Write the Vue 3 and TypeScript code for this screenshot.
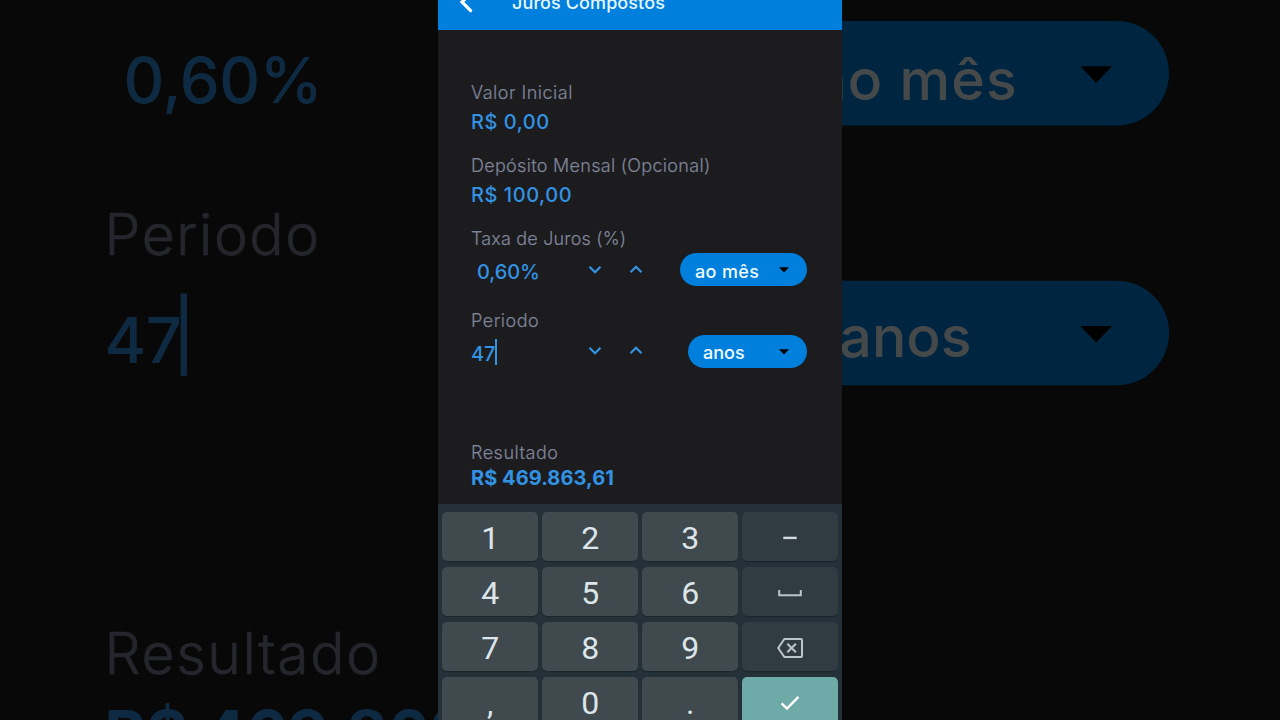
<script setup lang="ts">
interface Rate {
  label: string
  value: string
  unit: string
  editing: boolean
  kind: string
}

const layers: string[] = ['backdrop', 'front']

const deposits = [
  { label: 'Valor Inicial', value: 'R$ 0,00', kind: 'initial' },
  { label: 'Depósito Mensal (Opcional)', value: 'R$ 100,00', kind: 'monthly' },
]

const rates: Rate[] = [
  { label: 'Taxa de Juros (%)', value: '0,60%', unit: 'ao mês', editing: false, kind: 'rate' },
  { label: 'Periodo', value: '47', unit: 'anos', editing: true, kind: 'period' },
]

const keys: string[] = ['1', '2', '3', 'minus', '4', '5', '6', 'space', '7', '8', '9', 'delete', ',', '0', '.', 'done']
const actions = ['minus', 'space', 'delete', 'done']
</script>

<template>
  <main class="stage">
    <div v-for="layer in layers" :key="layer" class="phone" :class="layer" :aria-hidden="layer === 'backdrop'">
      <header class="bar">
        <svg class="back" viewBox="0 0 16 24" width="16" height="24">
          <path d="M12.6 2.4 4 11 12.6 19.6" />
        </svg>
        <h1 class="title">Juros Compostos</h1>
      </header>

      <section class="form">
        <div v-for="d in deposits" :key="d.kind" class="field">
          <div class="label" :class="d.kind"><span>{{ d.label }}</span></div>
          <div class="value" :class="d.kind"><span>{{ d.value }}</span></div>
        </div>

        <div v-for="r in rates" :key="r.kind" class="field rated" :class="r.kind">
          <div class="label" :class="r.kind"><span>{{ r.label }}</span></div>
          <div class="row">
            <div class="value entry" :class="r.kind">
              <span>{{ r.value }}</span><i v-if="r.editing" class="caret"></i>
            </div>
            <svg class="step" viewBox="0 0 14 10" width="14" height="10"><path d="M1.5 1.8 7 7.2 12.5 1.8" /></svg>
            <svg class="step up" viewBox="0 0 14 10" width="14" height="10"><path d="M1.5 7.2 7 1.8 12.5 7.2" /></svg>
            <div class="pill" :class="r.kind">
              <span>{{ r.unit }}</span>
              <svg viewBox="0 0 10 6" width="10" height="6"><path d="M0 0.3h10L5 5.5z" /></svg>
            </div>
          </div>
        </div>

        <div class="result">
          <div class="label outcome"><span>Resultado</span></div>
          <div class="total"><span>R$ 469.863,61</span></div>
        </div>
      </section>

      <section v-if="layer === 'front'" class="keyboard">
        <div v-for="k in keys" :key="k" class="key" :class="{ action: actions.includes(k), done: k === 'done' }">
          <svg v-if="k === 'minus'" viewBox="0 0 14 4" width="14" height="4"><path class="line" d="M0.3 1.9h13.4" /></svg>
          <svg v-else-if="k === 'space'" viewBox="0 0 24 8" width="24" height="8"><path class="line soft" d="M1.2 1v5.3h21.6V1" /></svg>
          <svg v-else-if="k === 'delete'" viewBox="0 0 28 22" width="28" height="22">
            <path class="line soft" d="M8.4 1.9H24.6a1.4 1.4 0 0 1 1.4 1.4v15.4a1.4 1.4 0 0 1-1.4 1.4H8.4L2.2 11z" />
            <path class="line soft" d="m11.3 6.7 8.6 8.6m0-8.6-8.6 8.6" />
          </svg>
          <svg v-else-if="k === 'done'" viewBox="0 0 20 16" width="20" height="16"><path class="line tick" d="M1.6 8.3 7 13.6 18.4 1.9" /></svg>
          <span v-else>{{ k }}</span>
        </div>
      </section>
    </div>
  </main>
</template>

<style>
html,
body {
  margin: 0;
  background: #000;
  overflow: hidden;
}
</style>

<style scoped>
.stage {
  position: relative;
  width: 1280px;
  height: 720px;
  overflow: hidden;
  background: #000;
  font-family: Inter, "Noto Sans", sans-serif;
}
.phone {
  position: absolute;
  top: 0;
  left: 438px;
  width: 404px;
  height: 720px;
  overflow: hidden;
  background: #1c1c1e;
}
.backdrop {
  transform: scale(3.168);
  opacity: 0.29;
}
.bar {
  display: flex;
  align-items: center;
  height: 54px;
  margin-top: -24px;
  padding-left: 20px;
  background: #007fdc;
  box-sizing: border-box;
}
.back {
  margin-top: -1px;
}
.back path {
  fill: none;
  stroke: #fff;
  stroke-width: 3.2;
  stroke-linecap: round;
}
.title {
  margin: -2px 0 0 38px;
  color: #e6f6ff;
  font-size: 18px;
  font-weight: 500;
  line-height: 27px;
  letter-spacing: 0.1px;
  white-space: nowrap;
}
.form {
  height: 474px;
  padding: 49px 35px 0 33px;
  box-sizing: border-box;
}
.field {
  margin-bottom: 15px;
}
.field.rate {
  margin-bottom: 20px;
}
.label {
  height: 28px;
  color: #7f849a;
  font-size: 18px;
  font-weight: 300;
  -webkit-text-stroke: 0.2px #7f849a;
  line-height: 28px;
  white-space: nowrap;
  letter-spacing: 0.5px;
}
.label.monthly {
  letter-spacing: 0.3px;
}
.label.rate {
  letter-spacing: 0.17px;
}
.value {
  height: 30px;
  color: #3292e3;
  font-size: 20px;
  font-weight: 500;
  line-height: 31px;
  letter-spacing: 0.55px;
  white-space: nowrap;
}
.row {
  display: flex;
  align-items: center;
  height: 34px;
}
.entry {
  display: flex;
  align-items: center;
  width: 117px;
  padding-top: 4px;
  box-sizing: border-box;
  letter-spacing: -0.1px;
}
.entry.rate {
  padding-left: 6px;
}
.caret {
  width: 2px;
  height: 26px;
  margin: -4px 0 0 -0.5px;
  background: #3292e3;
}
.step {
  margin-top: -1px;
}
.period .step {
  margin-top: -2.5px;
}
.step.up {
  margin-left: 27px;
}
.step path {
  fill: none;
  stroke: #3292e3;
  stroke-width: 2.3;
}
.pill {
  display: flex;
  align-items: center;
  justify-content: space-between;
  width: 127px;
  height: 33px;
  margin: 0 0 0.5px auto;
  padding: 0 18px 0 15px;
  box-sizing: border-box;
  border-radius: 17px;
  background: #007fdc;
  color: #f0fbff;
  font-size: 18px;
  font-weight: 550;
  line-height: 33px;
  letter-spacing: 0.35px;
  white-space: nowrap;
}
.pill span {
  padding-top: 2px;
}
.pill.rate span {
  padding-top: 3px;
}
.pill.period {
  width: 119px;
  letter-spacing: 0;
}
.result {
  margin-top: 70px;
}
.total {
  height: 25px;
  color: #3292e3;
  font-size: 20px;
  font-weight: 700;
  line-height: 23px;
  letter-spacing: 0.05px;
  white-space: nowrap;
}
.keyboard {
  display: grid;
  grid-template-columns: repeat(4, 95.5px);
  grid-auto-rows: 49px;
  gap: 6px 4.5px;
  height: 216px;
  padding: 8px 4px 0;
  box-sizing: border-box;
  overflow: hidden;
  background: #243138;
}
.key {
  display: flex;
  align-items: center;
  justify-content: center;
  border-radius: 5px;
  background: #404a4e;
  box-shadow: 0 1px 1px #1b262c;
  color: #dce5e9;
  font-family: Roboto, sans-serif;
  font-size: 32px;
  line-height: 48px;
}
.key span {
  padding: 2px 0 0 1px;
}
.key svg {
  margin-top: 2px;
}
.key.action {
  background: #313b42;
}
.key.done {
  background: #6eaba8;
}
.line {
  fill: none;
  stroke: #d3dde1;
  stroke-width: 2.4;
}
.line.soft {
  stroke: #bcc5ca;
  stroke-width: 2;
}
.line.tick {
  stroke: #fff;
}
</style>
